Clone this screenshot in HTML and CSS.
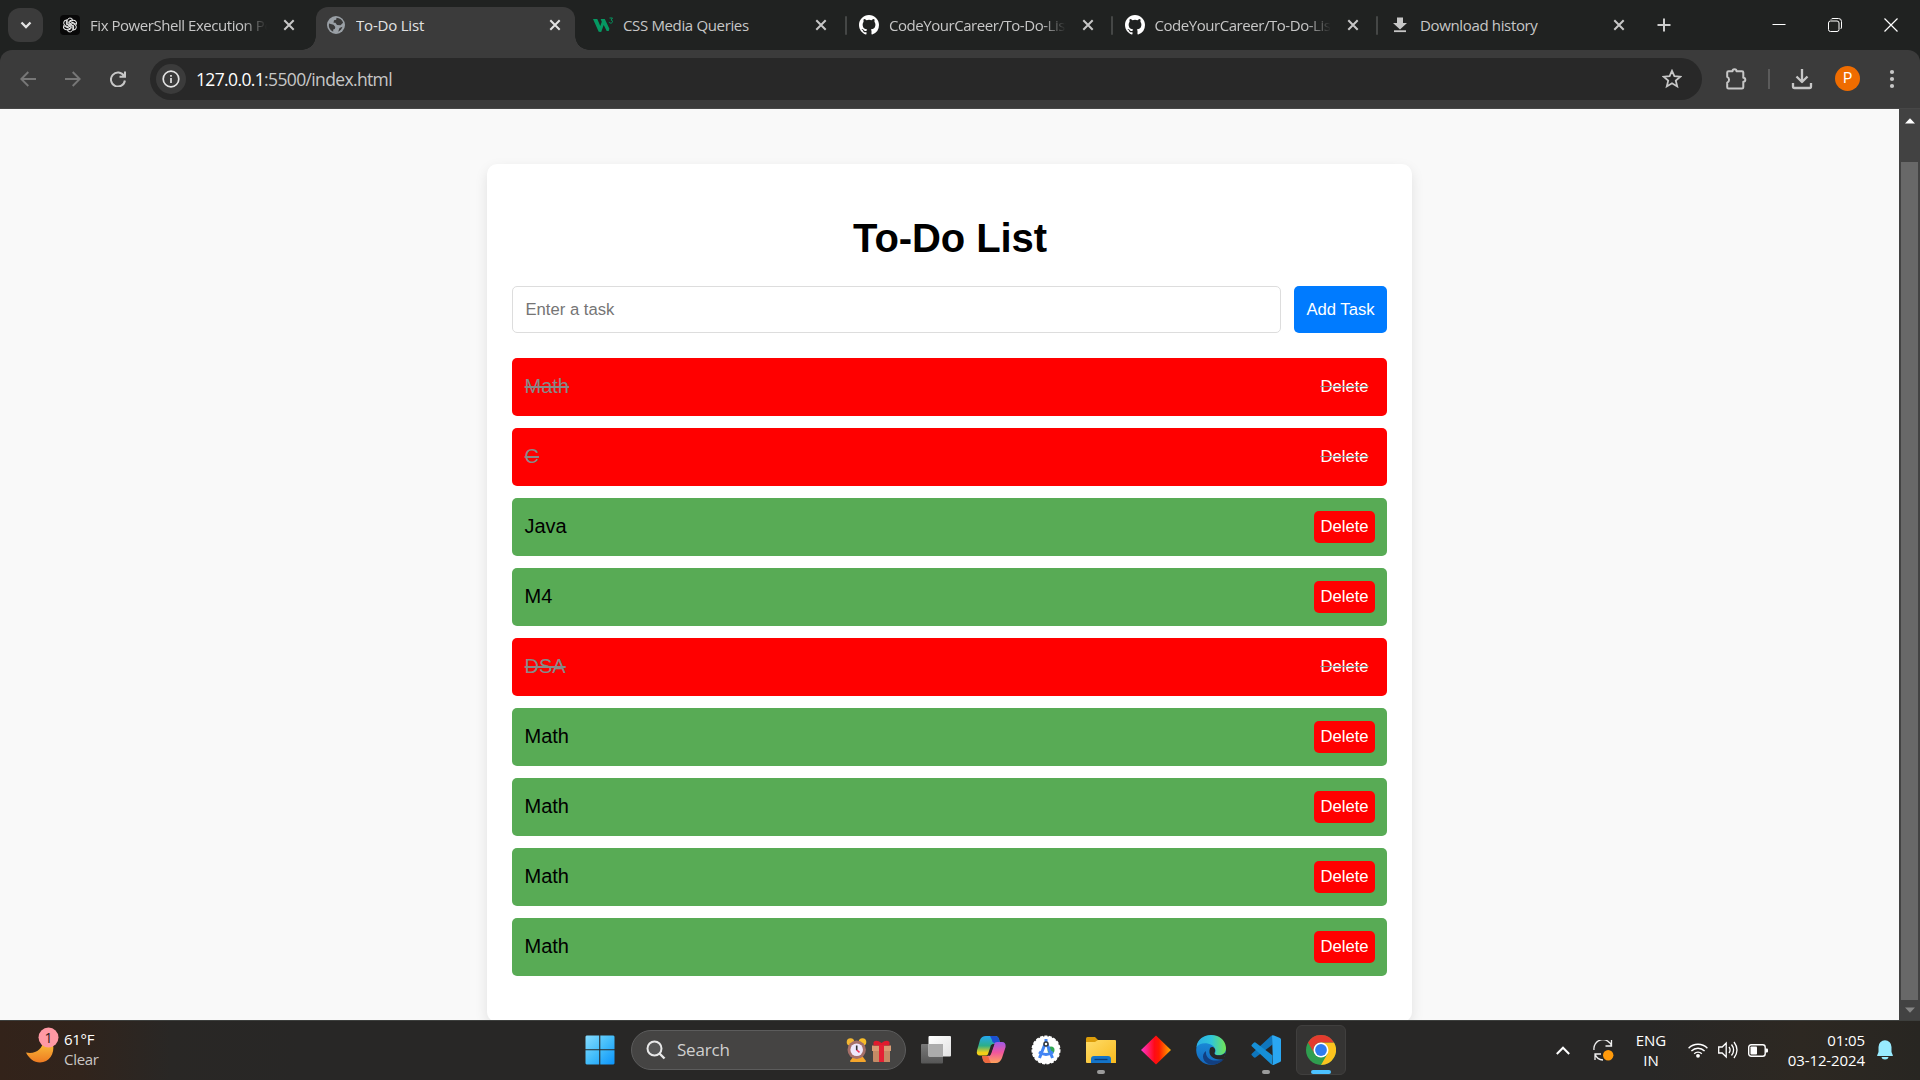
FILE: index.html
```html
<!DOCTYPE html>
<html lang="en">
<head>
<meta charset="utf-8">
<title>To-Do List</title>
<link rel="stylesheet" href="styles.css">
</head>
<body>
<svg class="defs" aria-hidden="true">
  <defs>
    <symbol id="close" viewBox="0 0 20 20"><path d="M5.3 5.3l9.4 9.4M14.7 5.3l-9.4 9.4" stroke="currentColor" stroke-width="2" fill="none"/></symbol>
    <symbol id="github" viewBox="0 0 16 16"><path fill="#fff" d="M8 0C3.58 0 0 3.58 0 8c0 3.54 2.29 6.53 5.47 7.59.4.07.55-.17.55-.38 0-.19-.01-.82-.01-1.49-2.01.37-2.53-.49-2.69-.94-.09-.23-.48-.94-.82-1.13-.28-.15-.68-.52-.01-.53.63-.01 1.08.58 1.23.82.72 1.21 1.87.87 2.33.66.07-.52.28-.87.51-1.07-1.78-.2-3.64-.89-3.64-3.95 0-.87.31-1.59.82-2.15-.08-.2-.36-1.02.08-2.12 0 0 .67-.21 2.2.82a7.6 7.6 0 0 1 4 0c1.53-1.04 2.2-.82 2.2-.82.44 1.1.16 1.92.08 2.12.51.56.82 1.27.82 2.15 0 3.07-1.87 3.75-3.65 3.95.29.25.54.73.54 1.48 0 1.07-.01 1.93-.01 2.2 0 .21.15.46.55.38A8.01 8.01 0 0 0 16 8c0-4.42-3.58-8-8-8z"/></symbol>
  </defs>
</svg>
<div class="screen">
  <header class="tabstrip">
    <button class="tab-search"><svg width="14" height="14" viewBox="0 0 14 14"><path d="M2.500 4.500L7 9l4.500-4.500" fill="none" stroke="#e3e3e3" stroke-width="2.300"/></svg></button>
    <div class="tab first">
      <span class="fav"><svg width="20" height="20" viewBox="0 0 20 20"><rect width="20" height="20" rx="4" fill="#080808"/><g fill="none" stroke="#eee" stroke-width="1"><path id="petal" d="M7.200 10V5.800a3 3 0 0 1 5.400-1.500L9 6.400v4.700"/><use href="#petal" transform="rotate(60 10 10)"/><use href="#petal" transform="rotate(120 10 10)"/><use href="#petal" transform="rotate(180 10 10)"/><use href="#petal" transform="rotate(240 10 10)"/><use href="#petal" transform="rotate(300 10 10)"/></g></svg></span>
      <span class="tab-title fade">Fix PowerShell Execution Policy</span>
      <svg class="x"><use href="#close"/></svg>
    </div>
    <div class="tab active">
      <span class="fav"><svg width="18" height="18" viewBox="0 0 18 18"><circle cx="9" cy="9" r="9" fill="#9aa0a6"/><path d="M2 7.500l4.500 1.200 1.800 2.300-.5 2-1.600.4v2.400A7.400 7.400 0 0 1 2 7.500zM9.500 1.700c3.300.1 5.800 2.300 6.600 5l-2.600 2.500-3.500-.3-1.600-2.200H6.500L7 4.300l2.200-.6zM12.500 12l3-1.300c-.6 2.300-2.200 4-4.300 5z" fill="#3b3b3b"/></svg></span>
      <span class="tab-title lit">To-Do List</span>
      <svg class="x lit"><use href="#close"/></svg>
    </div>
    <div class="tab">
      <span class="fav"><svg width="20" height="16" viewBox="0 0 20 16"><path d="M0 2h4.300l3 7 1.500-4.200L7.600 2h4.200l4.600 9.700L15.700 14h-2L10.700 8l-2.500 7-2.500-.2z" fill="#059862"/><path d="M16.500 1h3L18 3.100c2.300 0 1.900 3.100-.3 3-1 0-1.500-.6-1.500-1.200" fill="none" stroke="#059862"/></svg></span>
      <span class="tab-title snug">CSS Media Queries</span>
      <svg class="x"><use href="#close"/></svg>
    </div>
    <div class="tab sep">
      <span class="fav"><svg width="20" height="20"><use href="#github"/></svg></span>
      <span class="tab-title fade">CodeYourCareer/To-Do-List</span>
      <svg class="x"><use href="#close"/></svg>
    </div>
    <div class="tab sep">
      <span class="fav"><svg width="20" height="20"><use href="#github"/></svg></span>
      <span class="tab-title fade">CodeYourCareer/To-Do-List</span>
      <svg class="x"><use href="#close"/></svg>
    </div>
    <div class="tab sep">
      <span class="fav"><svg width="20" height="20" viewBox="0 0 20 20"><path d="M7 2.500h6V8h4l-7 6.500L3 8h4z" fill="#c7c7c7"/><rect x="4" y="15.300" width="12" height="1.800" fill="#c7c7c7"/></svg></span>
      <span class="tab-title snug">Download history</span>
      <svg class="x"><use href="#close"/></svg>
    </div>
    <div class="newtab"><svg width="14" height="14" viewBox="0 0 14 14"><path d="M7 .5v13M.5 7h13" stroke="#ccc" stroke-width="2"/></svg></div>
    <div class="winbtns">
      <svg width="14" height="14" viewBox="0 0 14 14"><path d="M.5 6.500h13" stroke="#fff"/></svg>
      <svg width="14" height="14" viewBox="0 0 14 14"><rect x=".5" y="3" width="10.500" height="10.500" rx="2" fill="none" stroke="#fff"/><path d="M3 1.500Q3.500.5 5 .5h5.500a3 3 0 0 1 3 3V9q0 1.500-1 2" fill="none" stroke="#fff"/></svg>
      <svg width="14" height="14" viewBox="0 0 14 14"><path d="M.5.5l13 13M13.500.5l-13 13" stroke="#fff" stroke-width="1.200"/></svg>
    </div>
  </header>

  <nav class="toolbar">
    <svg class="nav" width="16" height="16" viewBox="0 0 16 16"><path d="M16 8H1.500M8.300 1L1.300 8l7 7" fill="none" stroke="#777" stroke-width="1.900"/></svg>
    <svg class="nav" width="16" height="16" viewBox="0 0 16 16"><path d="M0 8h14.500M7.700 1l7 7-7 7" fill="none" stroke="#777" stroke-width="1.900"/></svg>
    <svg class="nav" width="16" height="16" viewBox="0 0 16 16"><path d="M14 5A7 7 0 1 0 14.900 9.500M15 .5v5.300H9.500" fill="none" stroke="#c7c7c7" stroke-width="2"/></svg>
    <div class="omnibox">
      <span class="info"><svg width="18" height="18" viewBox="0 0 18 18"><circle cx="9" cy="9" r="7.800" fill="none" stroke="#e3e3e3" stroke-width="1.700"/><path d="M9 8v5M9 5v1.800" stroke="#e3e3e3" stroke-width="1.700"/></svg></span>
      <span class="url"><b>127.0.0.1</b>:5500/index.html</span>
      <svg class="star" width="20" height="20" viewBox="0 0 20 20"><path d="M10 1.800l2.400 5.400 5.900.5-4.500 3.900 1.400 5.800L10 14.300l-5.200 3.100 1.400-5.800L1.700 7.700l5.900-.5z" fill="none" stroke="#c7c7c7" stroke-width="1.800"/></svg>
    </div>
    <svg class="ext" width="22" height="22" viewBox="0 0 22 22"><path d="M3.500 3.300h4a2 2 0 0 1 4 0h5.500q1.300 0 1.300 1.300v5.200a2 2 0 0 1 0 4v5.400q0 1.300-1.300 1.300H3.500q-1.300 0-1.300-1.300v-4.500a3.200 3.200 0 0 0 0-5.800V4.600q0-1.300 1.300-1.300z" fill="none" stroke="#c7c7c7" stroke-width="2" stroke-linejoin="round"/></svg>
    <span class="bar-sep"></span>
    <svg class="dl" width="22" height="22" viewBox="0 0 22 22"><path d="M11 1v12.500M5.500 8.500l5.500 5.500 5.500-5.500M2 15v3.500Q2 20 3.500 20h15q1.500 0 1.500-1.500V15" fill="none" stroke="#c7c7c7" stroke-width="2.300" stroke-linejoin="round"/></svg>
    <span class="avatar">P</span>
    <svg class="dots" width="6" height="20" viewBox="0 0 6 20"><g fill="#c7c7c7"><circle cx="3" cy="3" r="2.100"/><circle cx="3" cy="10" r="2.100"/><circle cx="3" cy="17" r="2.100"/></g></svg>
  </nav>

  <div class="viewport">
    <main class="page">
      <section class="card">
        <h1>To-Do List</h1>
        <div class="entry">
          <input class="task-input" type="text" placeholder="Enter a task">
          <button class="add">Add Task</button>
        </div>
        <ul class="tasks">
          <li class="done">Math<button>Delete</button></li>
          <li class="done">C<button>Delete</button></li>
          <li>Java<button>Delete</button></li>
          <li>M4<button>Delete</button></li>
          <li class="done">DSA<button>Delete</button></li>
          <li>Math<button>Delete</button></li>
          <li>Math<button>Delete</button></li>
          <li>Math<button>Delete</button></li>
          <li>Math<button>Delete</button></li>
        </ul>
      </section>
    </main>
    <div class="scrollbar">
      <svg width="10" height="6" viewBox="0 0 10 6"><path d="M0 5.500L5 .3l5 5.200z" fill="#fff"/></svg>
      <span class="thumb"></span>
      <svg width="10" height="6" viewBox="0 0 10 6"><path d="M0 .5l5 5.200L10 .5z" fill="#858585"/></svg>
    </div>
  </div>

  <footer class="taskbar">
    <div class="weather">
      <svg width="34" height="38" viewBox="0 0 34 38"><defs><linearGradient id="moon" x1="0" y1="0" x2="0" y2="1"><stop offset="0" stop-color="#fbc53c"/><stop offset="1" stop-color="#ee7b22"/></linearGradient></defs><path d="M0 25.500c9 2 17-3 17-12l10 4c2 9-4 18-13 18-6 0-11-4-14-10z" fill="url(#moon)"/><circle cx="22.500" cy="10.500" r="10" fill="#ff99a4"/><text x="22.500" y="16" class="badge-num">1</text></svg>
      <div class="weather-text"><span>61°F</span><span class="dim">Clear</span></div>
    </div>
    <div class="center">
      <svg class="start" width="30" height="30" viewBox="0 0 30 30"><defs><linearGradient id="win" x1="0" y1="0" x2="1" y2="1"><stop offset="0" stop-color="#86dcff"/><stop offset=".5" stop-color="#43bdfa"/><stop offset="1" stop-color="#0c94fb"/></linearGradient></defs><path d="M1.500.5h12.700v13.700H.5V1.500zM15.300.5h13.200l1 1v12.700H15.300zM.5 15.300h13.700v14.200H1.500l-1-1zM15.300 15.300h14.200v13.200l-1 1H15.300z" fill="url(#win)"/></svg>
      <div class="search">
        <svg width="20" height="20" viewBox="0 0 20 20"><circle cx="8.500" cy="8.500" r="7" fill="#575757" stroke="#e8e8e8" stroke-width="2"/><path d="M13.500 13.500l5 5" stroke="#e8e8e8" stroke-width="2.400"/></svg>
        <span class="search-label">Search</span>
        <svg width="46" height="26" viewBox="0 0 46 26"><path d="M4 24l3-4h10l3 4q0 1-1 1H5q-1 0-1-1z" fill="#f4a52b"/><circle cx="4.500" cy="5" r="3.800" fill="#f2b632"/><circle cx="16.500" cy="5" r="3.800" fill="#f9bd28"/><circle cx="10.700" cy="12.700" r="9.200" fill="#a56f69"/><circle cx="10.700" cy="12.700" r="6.300" fill="#eee7fb"/><path d="M10.700 8.500v4.700" stroke="#333" stroke-width="1.600"/><path d="M10.700 13l2.800 2.400" stroke="#ef3056" stroke-width="1.500"/><path d="M27 12h17v13H28q-1 0-1-1z" fill="#c58a65"/><path d="M26 8.500h19v5.500H26z" fill="#d99b73"/><path d="M27.500 5q3-3 8 1 5-4 8-1v3.500h-16z" fill="#df1b2d"/><path d="M33 8h5v17h-5z" fill="#e52034"/></svg>
      </div>
      <div class="app"><svg width="30" height="30" viewBox="0 0 30 30"><defs><linearGradient id="tvb" x1="0" y1="0" x2="0" y2="1"><stop offset="0" stop-color="#797979"/><stop offset="1" stop-color="#565656"/></linearGradient><linearGradient id="tvf" x1="0" y1="0" x2="1" y2="1"><stop offset="0" stop-color="#fff"/><stop offset="1" stop-color="#e2e2e2"/></linearGradient></defs><rect x="0" y="9" width="22" height="19.500" rx="1" fill="url(#tvb)"/><rect x="7.500" y="1" width="22.500" height="20.500" rx="1" fill="url(#tvf)"/><path d="M7.500 9H22v12.500H7.500z" fill="#acacac"/></svg></div>
      <div class="app"><svg width="30" height="30" viewBox="0 0 30 30"><defs><linearGradient id="cpa" x1="0" y1="0" x2="0" y2="1"><stop offset="0" stop-color="#25a8f1"/><stop offset=".5" stop-color="#2dae88"/><stop offset=".85" stop-color="#f2d018"/></linearGradient><linearGradient id="cpb" x1="0" y1="0" x2="0" y2="1"><stop offset="0" stop-color="#9e59e8"/><stop offset=".5" stop-color="#f1569d"/><stop offset="1" stop-color="#ffa35b"/></linearGradient></defs><path d="M10 1h9q3 0 4 3l1 4h-4l-5 2-3 9q-.5 1.500-2 1.500H4q-4 0-3-5L4 5q1.500-4 6-4z" fill="url(#cpa)"/><path d="M14 1h5q3 0 4 3l1 4h-5q-3 0-3-3z" fill="#1c50d2"/><path d="M20 28h-9q-3 0-4-3l-1-4h5q3 0 4-3l3-9q1-2 3-2h5q4 0 3.600 5L26 23q-2 5-6 5z" fill="url(#cpb)"/><path d="M15 28h-4q-3 0-4-3l-1-4h4q3 0 3 3z" fill="#ee693f"/><path d="M13 19l3.500-10h2L15 19q-.5 1.500-2 2z" fill="#262626"/></svg></div>
      <div class="app"><svg width="30" height="30" viewBox="0 0 30 30"><circle cx="15" cy="15" r="13.800" fill="#fff" stroke="#fff" stroke-width="1.500" stroke-dasharray="3 1.500"/><circle cx="20" cy="15" r="3.500" fill="#34a853"/><path d="M14 9L8.500 23M16 9l5.500 14M8 17q7 5 14 0" fill="none" stroke="#4285f4" stroke-width="3"/><path d="M15 4v4" stroke="#4285f4" stroke-width="3"/><circle cx="15" cy="9" r="2" fill="#fff" stroke="#34383d" stroke-width="1.500"/></svg></div>
      <div class="app"><svg width="30" height="30" viewBox="0 0 30 30"><defs><linearGradient id="fold" x1="0" y1="0" x2="1" y2="1"><stop offset="0" stop-color="#ffdc69"/><stop offset="1" stop-color="#f8ba1d"/></linearGradient></defs><path d="M0 3.500Q0 2 1.500 2H9l3 3v5H0z" fill="#dc9d0a"/><path d="M0 7h9l3-2h17q1 0 1 1v22H1q-1 0-1-1z" fill="url(#fold)"/><path d="M5 28v-4q0-3 3-3h14q3 0 3 3v4z" fill="#1474c8"/><path d="M8.500 24.500h13" stroke="#0a3c78" stroke-width="1.300"/></svg><i class="running"></i></div>
      <div class="app"><svg width="30" height="30" viewBox="0 0 30 30"><defs><linearGradient id="dia"><stop offset="0" stop-color="#ff35d2"/><stop offset=".45" stop-color="#ff0a16"/><stop offset=".6" stop-color="#ff1a00"/><stop offset="1" stop-color="#ffb000"/></linearGradient></defs><path d="M15 .5L30 15 15 29.500 0 15z" fill="url(#dia)"/></svg></div>
      <div class="app"><svg width="30" height="30" viewBox="0 0 30 30"><defs><linearGradient id="ea"><stop offset="0" stop-color="#2aaee5"/><stop offset=".5" stop-color="#2fc5da"/><stop offset="1" stop-color="#72e552"/></linearGradient><linearGradient id="eb" x1="0" y1="0" x2="0" y2="1"><stop offset="0" stop-color="#1a94df"/><stop offset="1" stop-color="#1467bd"/></linearGradient></defs><circle cx="15" cy="15" r="14.800" fill="url(#eb)"/><path d="M10 16c-1 8 7 12 18 8-3 4-8 6-13 5.800C6 28 5 19 10 16z" fill="#123f80"/><path d="M.5 12C2-4 29-4 30 13c0 7-6 8-11 6.500-1-1 1-1.500.5-4.500C18 7 4 6 .5 12z" fill="url(#ea)"/><path d="M14 13c3-3 6 1 5 3.500-.6 1.500-1 2.500.5 3.200 3 1.300 7 .8 10-2.200-.3 3-1 5-2 6.500C20 26 11 22 14 13z" fill="#262626"/></svg></div>
      <div class="app"><svg width="30" height="30" viewBox="0 0 30 30"><path d="M21.500 1v8.500L4.500 22.500Q3.500 23 2.500 22L.8 20.300Q0 19.300 1 18.500L20 1q1-.8 1.500 0z" fill="#0f76bd"/><path d="M21.500 29v-8.500L4.500 7.500Q3.500 7 2.500 8L.8 9.700Q0 10.700 1 11.500L20 29q1 .8 1.500 0z" fill="#168fd6"/><path d="M21 .5q.8-.7 2 0L29 3q1 .5 1 1.500v21q0 1-1 1.500l-6 2.700q-1.200.5-2-.2l1-1z" fill="#2aa7f2"/></svg><i class="running"></i></div>
      <div class="app current"><svg width="30" height="30" viewBox="0 0 30 30"><circle cx="15" cy="15" r="15" fill="#2f9e4f"/><path d="M15 7.500h13A15 15 0 0 1 15 30l6.500-11.300z" fill="#fcc31e"/><path d="M2 7.500a15 15 0 0 1 26 0H15a7.500 7.500 0 0 0-6.500 11.200z" fill="#e33b2e"/><circle cx="15" cy="15" r="7.500" fill="#fff"/><circle cx="15" cy="15" r="5.900" fill="#2f7cee"/></svg><i class="running wide"></i></div>
    </div>
    <div class="tray">
      <svg class="chev" width="14" height="9" viewBox="0 0 14 9"><path d="M.8 8L7 1.700 13.200 8" fill="none" stroke="#fff" stroke-width="2"/></svg>
      <svg class="sync" width="21" height="21" viewBox="0 0 21 21"><path d="M1 10A9 9 0 0 1 18.500 6M18.500 0v6h-6M2 20v-6h6M2 14a9 9 0 0 0 8 6" fill="none" stroke="#eee" stroke-width="1.300"/><circle cx="15.200" cy="15.200" r="5.200" fill="#ff9a0b"/></svg>
      <div class="lang"><span>ENG</span><span>IN</span></div>
      <svg class="wifi" width="20" height="16" viewBox="0 0 20 16"><g fill="none" stroke="#fff" stroke-width="1.400"><path d="M.6 6.200a13.300 13.300 0 0 1 18.800 0M3.400 9a9.300 9.300 0 0 1 13.200 0M6.200 11.700a5.400 5.400 0 0 1 7.600 0"/></g><circle cx="10" cy="13.800" r="1.900" fill="#fff"/></svg>
      <svg class="vol" width="20" height="18" viewBox="0 0 20 18"><path d="M.7 6h3.500l4-4v14l-4-4H.7zM11 6q2.200 3 0 6M13.500 3.500q4.200 5.500 0 11M16 1q6 8 0 16" fill="none" stroke="#fff" stroke-width="1.300"/></svg>
      <svg class="bat" width="20" height="13" viewBox="0 0 20 13"><rect x=".7" y=".7" width="16.500" height="11.600" rx="2.500" fill="none" stroke="#fff" stroke-width="1.400"/><rect x="2.500" y="2.500" width="6.500" height="8" rx=".8" fill="#fff"/><path d="M17.500 4.500h1.500q1 0 1 1v2q0 1-1 1h-1.500z" fill="#fff"/></svg>
      <div class="clock"><span>01:05</span><span>03-12-2024</span></div>
      <svg class="bell" width="16" height="20" viewBox="0 0 16 20"><path d="M8 .3A6.500 6.500 0 0 0 1.500 7v5L.2 15.200V16h15.600v-.8L14.500 12V7A6.500 6.500 0 0 0 8 .3z" fill="#98ebff"/><path d="M4.500 17h7Q11 19.500 8 19.500T4.500 17z" fill="#98ebff"/></svg>
    </div>
  </footer>
</div>
</body>
</html>
```
FILE: styles.css
```css
* { box-sizing: border-box; }
body { margin: 0; overflow: hidden; background: #202221; }
svg { display: block; flex: none; }
.defs { position: absolute; width: 0; height: 0; }
button { border: 0; padding: 0; font: inherit; }
.screen {
  width: 1920px; height: 1080px;
  display: flex; flex-direction: column;
  font-family: "Open Sans", "Noto Sans", sans-serif;
}

/* Tab strip */
.tabstrip { height: 50px; flex: none; display: flex; background: #202221; padding-left: 8px; }
.tab-search {
  width: 35px; height: 34px; margin-top: 8px; border-radius: 12px; background: #3b3b3b;
  display: flex; align-items: center; justify-content: center;
}
.tab {
  width: 265.5px; height: 43px; margin-top: 7px; padding: 0 13px 7px 18px;
  display: flex; align-items: center; position: relative; color: #c7c7c7;
}
.tab.first { padding-left: 17px; width: 273px; padding-right: 17px; }
.tab.active {
  width: 259px; padding-left: 11px; padding-right: 10px;
  background: #3b3b3b; border-radius: 12px 12px 0 0;
}
.tab.active::before, .tab.active::after {
  content: ""; position: absolute; bottom: 0; width: 14px; height: 14px;
}
.tab.active::before { left: -14px; background: radial-gradient(circle at 0 0, transparent 13.5px, #3b3b3b 14px); }
.tab.active::after { right: -14px; background: radial-gradient(circle at 100% 0, transparent 13.5px, #3b3b3b 14px); }
.tab.active + .tab { width: 270px; padding-right: 14px; }
.tab.sep { padding-left: 14px; }
.tab.sep::before {
  content: ""; position: absolute; left: 0; top: 9px;
  width: 2px; height: 19px; border-radius: 1px; background: #454746;
}
.fav { width: 20px; margin-right: 10px; display: flex; flex: none; }
.active .fav { width: 18px; margin-right: 11px; }
.tab-title { flex: 1; font-size: 15px; line-height: 20px; white-space: nowrap; overflow: hidden; letter-spacing: -0.2px; }
.tab-title.fade { letter-spacing: -0.45px; -webkit-mask-image: linear-gradient(90deg, #000 86%, transparent); mask-image: linear-gradient(90deg, #000 86%, transparent); }
.tab-title.snug { letter-spacing: -0.35px; }
.lit { color: #e3e3e3; }
.x { width: 20px; height: 20px; margin-left: 12px; }
.newtab { width: 44px; padding: 18px 0 0 15px; }
.winbtns { margin-left: auto; display: flex; gap: 42px; padding: 18px 22px 0 0; }

/* Toolbar */
.toolbar {
  height: 59px; flex: none; display: flex; align-items: center;
  background: #3b3b3b; border-radius: 12px 12px 0 0; padding: 0 25px 1px 20px;
  border-bottom: 1px solid #474747;
}
.nav { margin-right: 29px; }
.omnibox {
  width: 1552px; height: 42px; margin-left: -5px; border-radius: 21px; background: #282828;
  display: flex; align-items: center; padding: 0 20px 0 6px;
}
.info { width: 30px; height: 30px; border-radius: 50%; background: #3b3b3b; display: flex; align-items: center; justify-content: center; }
.url { flex: 1; margin-left: 10px; color: #c7c7c7; font-size: 17.5px; letter-spacing: -0.64px; }
.url b { font-weight: 400; color: #fff; }
.ext { margin-left: 23px; }
.bar-sep { width: 2px; height: 20px; background: #5b5b5b; margin-left: 21px; }
.dl { margin-left: 21px; }
.avatar {
  width: 25px; height: 25px; margin-left: 22px; border-radius: 50%; background: #ef6c00; color: #fff;
  font: 14.5px/25px Roboto, sans-serif; text-align: center;
}
.dots { margin-left: auto; }

/* Web page */
.viewport { height: 911px; flex: none; display: flex; overflow: hidden; }
.page {
  width: 1899px; background: #f9f9f9; padding-top: 55px;
  font-family: "Liberation Sans", Arial, sans-serif;
}
.card {
  width: 925px; height: 858px; margin: 0 auto; padding: 25px; background: #fff;
  border-radius: 10px; box-shadow: 0 5px 12.5px rgba(0, 0, 0, .1);
}
.card h1 { margin: 26px 0 25px; padding-left: 1px; font-size: 40px; line-height: 46px; text-align: center; letter-spacing: -0.1px; }
.entry { display: flex; gap: 13px; height: 47px; margin-bottom: 25px; }
.task-input {
  flex: 1; border: 1px solid #ddd; border-radius: 5px; padding: 0 12.5px;
  font: 16.667px "Liberation Sans", Arial, sans-serif;
}
.task-input::placeholder { color: #757575; }
.add { width: 93px; border-radius: 5px; background: #007bff; color: #fff; font-size: 16.667px; }
.tasks { list-style: none; margin: 0; padding: 0; display: flex; flex-direction: column; gap: 12px; }
.tasks li {
  height: 58px; padding: 0 12px 2px 12.5px; border-radius: 5px; background: #58ab55;
  display: flex; align-items: center; justify-content: space-between; font-size: 20px; color: #000;
}
.tasks button { height: 32px; width: 61px; margin-top: 2px; border-radius: 5px; background: #f00; color: #fff; font-size: 16.667px; }
.tasks .done { background: #f00; color: #888; text-decoration: line-through; }
.tasks .done button { text-decoration: line-through #888; }

.scrollbar { width: 21px; background: #424242; display: flex; flex-direction: column; align-items: center; padding: 9px 0 7px; }
.thumb { width: 17px; height: 838px; margin: 38px 0 7px; background: #686868; }

/* Taskbar */
.taskbar {
  height: 60px; flex: none; display: grid; grid-template-columns: 572px 1fr 380px;
  border-top: 1px solid #3d3f3d; color: #fff; font-size: 15px; line-height: 20px; padding-bottom: 1px;
  background: linear-gradient(90deg, #33231a 0, #31241c 80px, #292725 170px, #282726 300px, #282726 1650px, #2d2822 1800px, #282622);
}
.weather { display: flex; padding: 6px 0 0 26px; }
.weather-text { margin: 2px 0 0 4px; display: flex; flex-direction: column; letter-spacing: -0.3px; }
.dim { color: #c9c6c4; }
.badge-num { font-size: 14px; text-anchor: middle; fill: #2a1a1a; }
.center { display: flex; align-items: center; padding-left: 12.5px; }
.search {
  width: 275px; height: 40px; margin: 0 5px 0 16.5px; border-radius: 20px; border: 1px solid #5c5c5c;
  background: #454443; display: flex; align-items: center; padding: 0 13px 0 14px;
}
.search-label { flex: 1; margin-left: 11px; font-size: 17px; color: #d0d0d0; letter-spacing: -0.2px; }
.app { width: 50px; height: 50px; margin-right: 5px; border-radius: 6px; display: flex; align-items: center; justify-content: center; position: relative; }
.current { background: #353433; border: 1px solid #403f3e; }
.running { position: absolute; bottom: 1px; width: 8px; height: 4px; border-radius: 2px; background: #9b9b9b; }
.wide { width: 20px; bottom: 0; background: #4cc2ff; }
.tray { display: flex; align-items: center; padding-left: 16px; }
.sync { margin-left: 23px; }
.lang { width: 32px; margin-left: 21px; display: flex; flex-direction: column; align-items: center; }
.wifi { margin-left: 21px; }
.vol, .bat { margin-left: 10px; }
.clock { width: 84px; margin-left: 13px; display: flex; flex-direction: column; align-items: flex-end; letter-spacing: -0.1px; }
.bell { margin-left: 12px; }
```
